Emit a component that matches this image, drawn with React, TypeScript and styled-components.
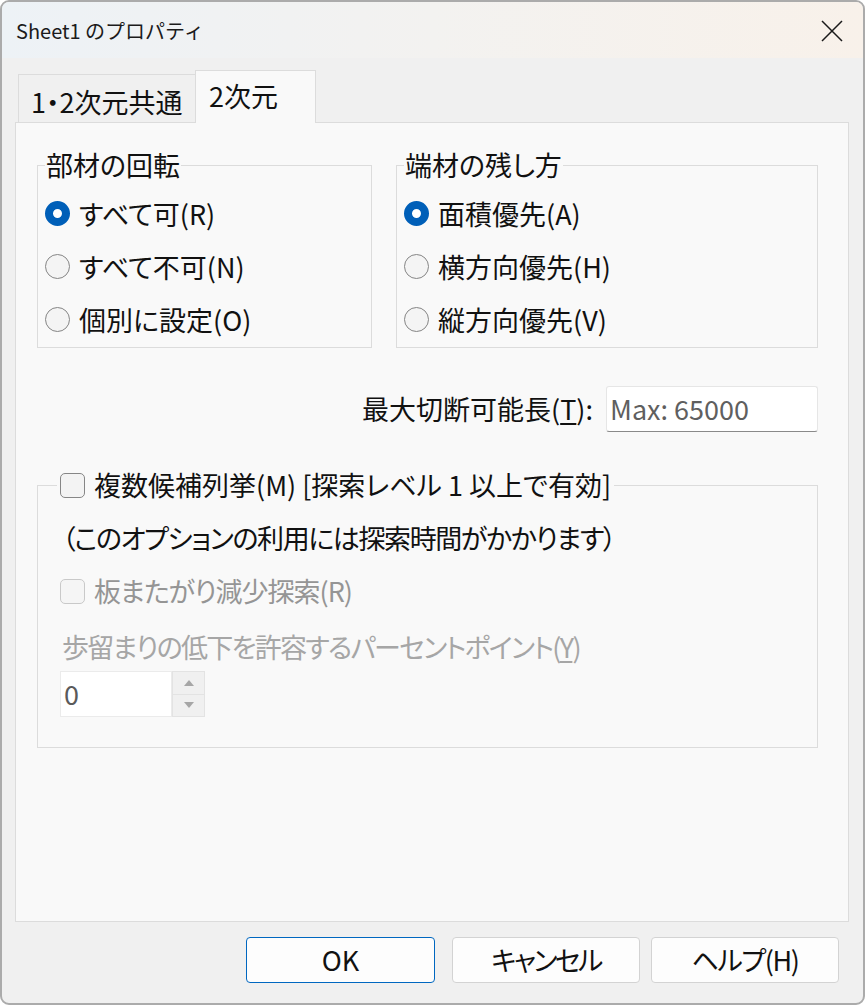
import React from "react";
import styled, { createGlobalStyle, css } from "styled-components";

const GlobalStyle = createGlobalStyle`
  html, body { margin: 0; padding: 0; background: #ffffff; }
  body {
    font-family: "Noto Sans CJK JP", "Noto Sans", sans-serif;
    color: #111;
    font-feature-settings: "palt" 1;
  }
  * { box-sizing: border-box; }
`;

const UI_FONT = css`
  font-size: 27px;
  line-height: 28px;
`;

const Window = styled.div`
  width: 865px;
  height: 1005px;
  border: 2px solid #ababab;
  border-radius: 9px;
  overflow: hidden;
  background: #f0f0f0;
  display: flex;
  flex-direction: column;
`;

const TitleBar = styled.div`
  height: 56px;
  flex: none;
  display: flex;
  align-items: center;
  justify-content: space-between;
  padding: 0 19px 0 14px;
  background: linear-gradient(90deg, #edf2f6 0%, #f3f2f0 50%, #f8f1ea 100%);
`;

const TitleText = styled.div`
  font-size: 20px;
  line-height: 24px;
  color: #1b1b1b;
  margin-top: 2px;
  font-feature-settings: normal;
`;

const CloseButton = styled.div`
  width: 24px;
  height: 24px;
  display: flex;
  align-items: center;
  justify-content: center;
  margin-top: 2px;
`;

const Body = styled.div`
  flex: 1;
  display: flex;
  flex-direction: column;
  padding: 12px 14px 20px 13px;
`;

const TabStrip = styled.div`
  display: flex;
  align-items: flex-end;
  height: 52px;
  padding-left: 3px;
`;

const Tab = styled.div<{ $active?: boolean; $w: number }>`
  width: ${(p) => p.$w}px;
  ${UI_FONT};
  display: flex;
  align-items: center;
  padding-left: 12px;
  border: 1px solid #dcdcdc;
  border-bottom: none;
  color: #111;
  ${(p) =>
    p.$active
      ? css`
          height: 53px;
          margin-bottom: -1px;
          background: #f9f9f9;
          position: relative;
          z-index: 1;
          padding-left: 13px;
          padding-bottom: 3px;
        `
      : css`
          height: 48px;
          background: #f0f0f0;
          border-right: none;
          padding-top: 6px;
        `}
`;

const Panel = styled.div`
  height: 800px;
  background: #f9f9f9;
  border: 1px solid #dcdcdc;
  padding: 28px 30px 0 21px;
`;

const GroupRow = styled.div`
  display: grid;
  grid-template-columns: 335px 422px;
  column-gap: 24px;
`;

const Group = styled.fieldset`
  margin: 0;
  min-width: 0;
  border: 1px solid #dcdcdc;
  padding: 8px 7px 1px 7px;
`;

const Legend = styled.legend`
  ${UI_FONT};
  padding: 0 1px;
  margin: 0;
  color: #111;
`;

const RadioRow = styled.label`
  height: 53px;
  display: flex;
  align-items: center;
  gap: 9px;
  ${UI_FONT};
  color: #111;
`;

const RadioDot = styled.span<{ $checked?: boolean }>`
  width: 25px;
  height: 25px;
  flex: none;
  border-radius: 50%;
  ${(p) =>
    p.$checked
      ? css`
          border: 8px solid #005fb8;
          background: #ffffff;
        `
      : css`
          border: 1px solid #858585;
          background: #f4f4f4;
        `}
`;

const FieldRow = styled.div`
  margin-top: 38px;
  display: flex;
  justify-content: flex-end;
  align-items: center;
  gap: 13px;
`;

const FieldLabel = styled.span`
  ${UI_FONT};
  color: #111;
  u {
    text-underline-offset: 3px;
  }
`;

const TextBox = styled.div`
  width: 212px;
  height: 46px;
  background: #ffffff;
  border: 1px solid #e6e6e6;
  border-bottom-color: #8a8a8a;
  border-radius: 3px;
  ${UI_FONT};
  color: #5f5f5f;
  display: flex;
  align-items: center;
  padding-left: 3px;
`;

const OptionGroup = styled.fieldset`
  margin: 39px 0 0 0;
  width: 781px;
  min-width: 0;
  border: 1px solid #dcdcdc;
  padding: 25px 22px 30px 22px;
`;

const CheckLegend = styled.legend`
  padding: 0 3px;
  margin-left: -3px;
  display: flex;
  align-items: center;
  gap: 9px;
  ${UI_FONT};
  color: #111;
`;

const CheckBox = styled.span<{ $disabled?: boolean }>`
  width: 25px;
  height: 25px;
  flex: none;
  border-radius: 5px;
  border: 1px solid ${(p) => (p.$disabled ? "#c9c9c9" : "#868686")};
  background: ${(p) => (p.$disabled ? "#f5f5f5" : "#f3f3f3")};
`;

const Note = styled.div`
  ${UI_FONT};
  color: #111;
  margin-left: 2px;
  letter-spacing: -1.4px;
`;

const CheckRow = styled.div`
  margin-top: 25px;
  display: flex;
  align-items: center;
  gap: 9px;
  ${UI_FONT};
  color: #959595;
  letter-spacing: -1px;
`;

const DisabledLabel = styled.div`
  margin-top: 28px;
  margin-left: 2px;
  ${UI_FONT};
  color: #a6a6a6;
  letter-spacing: -1.7px;
  u {
    text-underline-offset: 3px;
  }
`;

const Spin = styled.div`
  margin-top: 10px;
  display: flex;
  height: 46px;
`;

const SpinInput = styled.div`
  width: 112px;
  height: 46px;
  background: #ffffff;
  border: 1px solid #ebebeb;
  ${UI_FONT};
  color: #5a5a5a;
  display: flex;
  align-items: center;
  padding-left: 3px;
`;

const SpinButtons = styled.div`
  width: 33px;
  display: flex;
  flex-direction: column;
`;

const SpinButton = styled.div`
  flex: 1;
  background: #f0f0f0;
  border: 1px solid #e3e3e3;
  display: flex;
  align-items: center;
  justify-content: center;
  & + & {
    border-top: none;
  }
`;

const ButtonBar = styled.div`
  margin-top: 15px;
  display: flex;
  justify-content: flex-end;
  padding-right: 10px;
`;

const Button = styled.div<{ $primary?: boolean; $w: number; $ml: number; $ls?: number }>`
  width: ${(p) => p.$w}px;
  margin-left: ${(p) => p.$ml}px;
  height: 46px;
  border-radius: 4px;
  background: #fdfdfd;
  border: 1px solid ${(p) => (p.$primary ? "#0067c0" : "#d3d3d3")};
  display: flex;
  align-items: center;
  justify-content: center;
  ${UI_FONT};
  letter-spacing: ${(p) => p.$ls ?? 0}px;
  color: #111;
`;

const Tri = ({ up }: { up?: boolean }) => (
  <svg width="12" height="8" viewBox="0 0 12 8">
    <path d={up ? "M1 7 L6 1 L11 7 Z" : "M1 1 L6 7 L11 1 Z"} fill="#a6a6a6" />
  </svg>
);

export default function App() {
  return (
    <>
      <GlobalStyle />
      <Window>
        <TitleBar>
          <TitleText>Sheet1 のプロパティ</TitleText>
          <CloseButton>
            <svg width="22" height="22" viewBox="0 0 22 22">
              <path d="M1 1 L21 21 M21 1 L1 21" stroke="#1a1a1a" strokeWidth="1.5" />
            </svg>
          </CloseButton>
        </TitleBar>
        <Body>
          <TabStrip>
            <Tab $w={177}>1・2次元共通</Tab>
            <Tab $w={121} $active>
              2次元
            </Tab>
          </TabStrip>
          <Panel>
            <GroupRow>
              <Group>
                <Legend>部材の回転</Legend>
                <RadioRow>
                  <RadioDot $checked />
                  すべて可(R)
                </RadioRow>
                <RadioRow>
                  <RadioDot />
                  すべて不可(N)
                </RadioRow>
                <RadioRow>
                  <RadioDot />
                  個別に設定(O)
                </RadioRow>
              </Group>
              <Group>
                <Legend>端材の残し方</Legend>
                <RadioRow>
                  <RadioDot $checked />
                  面積優先(A)
                </RadioRow>
                <RadioRow>
                  <RadioDot />
                  横方向優先(H)
                </RadioRow>
                <RadioRow>
                  <RadioDot />
                  縦方向優先(V)
                </RadioRow>
              </Group>
            </GroupRow>
            <FieldRow>
              <FieldLabel>
                最大切断可能長(<u>T</u>):
              </FieldLabel>
              <TextBox>Max: 65000</TextBox>
            </FieldRow>
            <OptionGroup>
              <CheckLegend>
                <CheckBox />
                複数候補列挙(M) [探索レベル 1 以上で有効]
              </CheckLegend>
              <Note>（このオプションの利用には探索時間がかかります）</Note>
              <CheckRow>
                <CheckBox $disabled />
                板またがり減少探索(R)
              </CheckRow>
              <DisabledLabel>
                歩留まりの低下を許容するパーセントポイント(<u>Y</u>)
              </DisabledLabel>
              <Spin>
                <SpinInput>0</SpinInput>
                <SpinButtons>
                  <SpinButton>
                    <Tri up />
                  </SpinButton>
                  <SpinButton>
                    <Tri />
                  </SpinButton>
                </SpinButtons>
              </Spin>
            </OptionGroup>
          </Panel>
          <ButtonBar>
            <Button $primary $w={189} $ml={0}>
              OK
            </Button>
            <Button $w={188} $ml={17} $ls={-2.5}>
              キャンセル
            </Button>
            <Button $w={188} $ml={11} $ls={-1.4}>
              ヘルプ(H)
            </Button>
          </ButtonBar>
        </Body>
      </Window>
    </>
  );
}
